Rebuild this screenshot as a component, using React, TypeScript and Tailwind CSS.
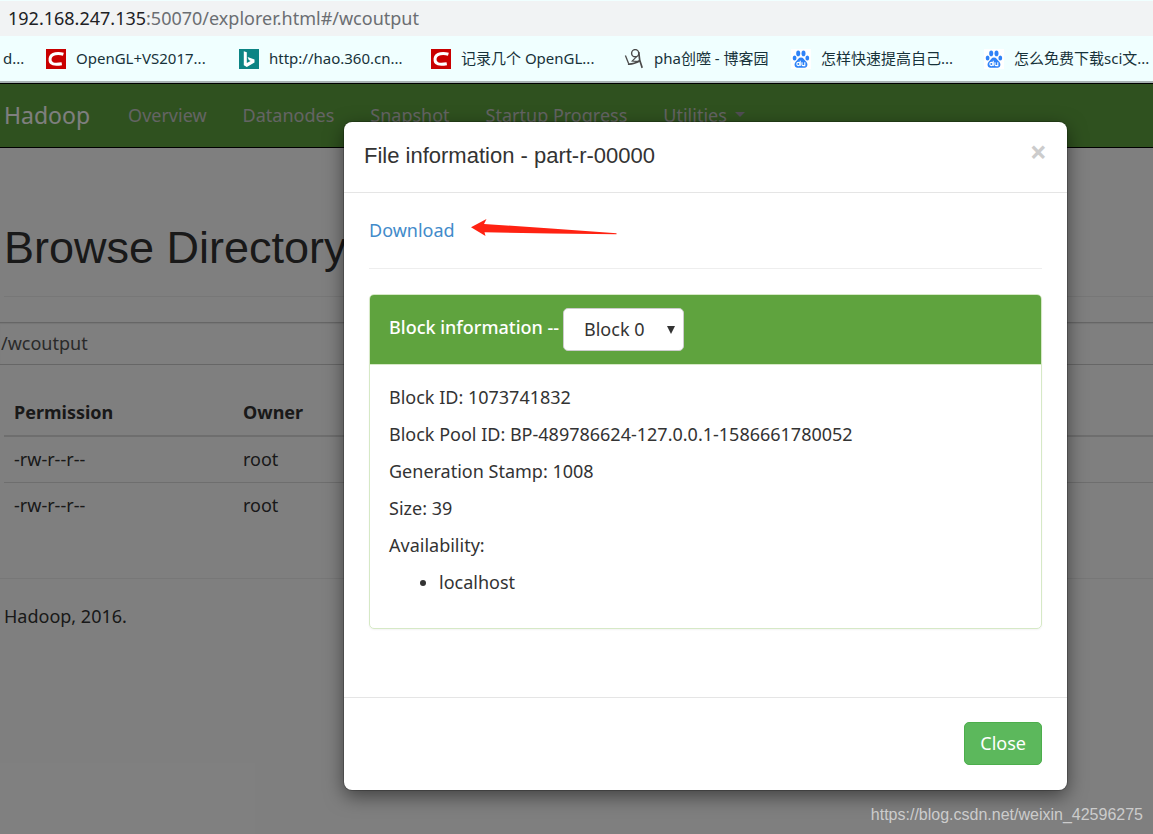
import React, { useState } from 'react';

interface Bookmark {
  label: string;
  icon: 'csdn' | 'bing' | 'cnblogs' | 'baidu';
  className: string;
}

const bookmarks: Bookmark[] = [
  { label: 'OpenGL+VS2017...', icon: 'csdn', className: 'w-[193px]' },
  { label: 'http://hao.360.cn...', icon: 'bing', className: 'w-[192px]' },
  { label: '记录几个 OpenGL...', icon: 'csdn', className: 'w-[193px]' },
  { label: 'pha创噬 - 博客园', icon: 'cnblogs', className: 'w-[167px]' },
  { label: '怎样快速提高自己...', icon: 'baidu', className: 'w-[193px]' },
  { label: '怎么免费下载sci文...', icon: 'baidu', className: 'w-[193px]' },
];

const navLinks = ['Overview', 'Datanodes', 'Snapshot', 'Startup Progress'];

const files = [
  { id: 1, permission: '-rw-r--r--', owner: 'root' },
  { id: 2, permission: '-rw-r--r--', owner: 'root' },
];

const blockInfo = [
  'Block ID: 1073741832',
  'Block Pool ID: BP-489786624-127.0.0.1-1586661780052',
  'Generation Stamp: 1008',
  'Size: 39',
  'Availability:',
];

const BookmarkIcon: React.FC<{ icon: Bookmark['icon'] }> = ({ icon }) => {
  if (icon === 'csdn') {
    return (
      <svg className="size-5 shrink-0" viewBox="0 0 20 20" aria-hidden="true">
        <rect width="20" height="20" fill="#c90000" />
        <path
          d="M17.4 5.3C13 4 5 3.8 4.1 9.6C3.4 15.6 9 15.8 15.8 14.7"
          fill="none"
          stroke="#fff"
          strokeWidth="3"
        />
      </svg>
    );
  }
  if (icon === 'bing') {
    return (
      <svg className="size-5 shrink-0" viewBox="0 0 20 20" aria-hidden="true">
        <rect width="20" height="20" fill="#0c8484" />
        <path d="M4.8 2.2L7.8 3.3V14L11.6 11.9L9.8 11L8.6 8L15.5 10.4V13.5L7.8 18L4.8 16.2Z" fill="#fff" />
      </svg>
    );
  }
  if (icon === 'cnblogs') {
    return (
      <svg className="size-5 shrink-0" viewBox="0 0 20 20" fill="none" stroke="#4a4a4a" aria-hidden="true">
        <circle cx="11.2" cy="4.2" r="3.6" strokeWidth="1.4" />
        <path d="M1.4 6.5L4.6 14.6" strokeWidth="1.3" />
        <path d="M4 15C8 15.6 12 13.8 16 11.4" strokeWidth="1.8" />
        <path d="M14.7 3C14.9 9 16 13.6 18.2 18.8" strokeWidth="1.7" />
        <path d="M12.6 7.6L8.2 12L15.4 12.6" strokeWidth="1.1" />
      </svg>
    );
  }
  return (
    <svg className="size-5 shrink-0" viewBox="0 0 20 20" aria-hidden="true">
      <rect width="20" height="20" fill="#fff" />
      <g fill="#2f82f7">
        <ellipse cx="7.2" cy="4.4" rx="2" ry="2.8" />
        <ellipse cx="12.5" cy="4.4" rx="2" ry="2.8" />
        <ellipse cx="3.6" cy="9" rx="1.9" ry="2.6" />
        <ellipse cx="16.3" cy="9" rx="1.9" ry="2.6" />
        <path d="M10 8.4C12.4 8.4 13 10.6 14.8 12.2C17.4 14.6 16.8 18.6 13.6 18.8H6.4C3.2 18.6 2.6 14.6 5.2 12.2C7 10.6 7.6 8.4 10 8.4Z" />
      </g>
      <g fill="none" stroke="#fff" strokeWidth="1.1">
        <circle cx="7.4" cy="15" r="1.6" />
        <path d="M9.2 11.8V17M11 13.2V15.8Q11.2 16.6 12.2 16.6H13.8V13.2" />
      </g>
    </svg>
  );
};

const BrowserBar: React.FC = () => (
  <header className="border-b-2 border-[#a8b3b3] bg-[#f0ffff] pt-px">
    <div className="flex h-[35px] items-center bg-[#f1f3f4] px-2 pb-[2px] text-lg text-[#202124]">
      <span>192.168.247.135</span>
      <span className="text-[#6b6e72]">:50070/explorer.html#/wcoutput</span>
    </div>
    <nav className="flex h-[45px] items-center overflow-hidden text-[15px] whitespace-nowrap text-[#17323a]">
      <a href="#" className="w-[46px] shrink-0 pl-[3px]">d...</a>
      {bookmarks.map((b) => (
        <a key={b.label} href="#" className={`flex shrink-0 items-center gap-[10px] ${b.className}`}>
          <BookmarkIcon icon={b.icon} />
          <span>{b.label}</span>
        </a>
      ))}
    </nav>
  </header>
);

const Navbar: React.FC = () => (
  <nav className="flex h-[65px] items-center gap-9 border-y border-black bg-[#5fa33e] pb-[2px] pl-1 text-lg text-[#c8c8c8]">
    <a href="#" className="mr-0.5 pt-[2px] text-[23px] text-white">Hadoop</a>
    {navLinks.map((link) => (
      <a key={link} href="#">{link}</a>
    ))}
    <a href="#" className="flex items-center gap-2">
      Utilities
      <svg className="h-[5px] w-[10px]" viewBox="0 0 10 5" fill="#a09ca8" aria-hidden="true">
        <path d="M0 0H10L5 5Z" />
      </svg>
    </a>
  </nav>
);

const Explorer: React.FC = () => {
  const [directory, setDirectory] = useState('/wcoutput');

  return (
    <div className="text-lg text-[#333]">
      <h1 className="ml-1 border-b border-[#eee] pt-[75px] pb-[23px] font-['Liberation_Sans',Arial,sans-serif] text-[45px] leading-[50px]">
        Browse Directory
      </h1>
      <input
        type="text"
        aria-label="Directory"
        value={directory}
        onChange={(e) => setDirectory(e.target.value)}
        className="mt-[25px] block h-[43px] w-full border-y border-[#ccc] bg-white pb-[2px] pl-px text-[#555] shadow-[inset_0_1px_1px_rgba(0,0,0,0.08)]"
      />
      <table className="mt-6 ml-1 w-full text-left leading-[26px]">
        <thead>
          <tr className="border-b-2 border-[#ddd]">
            <th className="w-[229px] px-[10px] py-[10px] font-bold">Permission</th>
            <th className="px-[10px] py-[10px] font-bold">Owner</th>
          </tr>
        </thead>
        <tbody>
          {files.map((f) => (
            <tr key={f.id} className="border-b border-[#ddd] last:border-0">
              <td className="px-[10px] pt-[9px] pb-[10px]">{f.permission}</td>
              <td className="px-[10px] pt-[9px] pb-[10px]">{f.owner}</td>
            </tr>
          ))}
        </tbody>
      </table>
      <footer className="mt-[50px] border-t border-[#eee] pt-6 pl-1 leading-[26px]">
        <p>Hadoop, 2016.</p>
      </footer>
    </div>
  );
};

const FileDialog: React.FC = () => {
  const [block, setBlock] = useState('0');

  return (
    <div
      role="dialog"
      aria-labelledby="dialog-title"
      className="rounded-lg bg-white text-lg text-[#333] shadow-[0_6px_19px_rgba(0,0,0,0.5)] ring-1 ring-black/20"
    >
      <div className="flex h-[71px] items-start justify-between border-b border-[#e5e5e5] px-5 pt-[19px]">
        <h4 id="dialog-title" className="font-['Liberation_Sans',Arial,sans-serif] text-[22px] leading-[30px]">
          File information - part-r-00000
        </h4>
        <button type="button" aria-label="Dismiss" className="text-[30px] leading-[22px] font-bold text-[#ccc]">
          ×
        </button>
      </div>

      <div className="px-[25px] pt-[25px] pb-[68px]">
        <div className="flex h-[51px] items-start gap-4 border-b border-[#eee] leading-[25px]">
          <a href="#" className="text-[#428bca]">Download</a>
          <svg className="mt-px h-[18px] w-[146px]" viewBox="0 0 146 18" fill="#ff2212" aria-hidden="true">
            <path d="M0 8.2L15.5 0L13 5L80 9.5L145.5 14.2V15.3L80 14.6L13.5 13.2L14.5 17Z" />
          </svg>
        </div>

        <section className="mt-[25px] rounded-[5px] border border-[#d6e9c6] shadow-xs">
          <div className="flex h-[70px] items-center gap-1 rounded-t-[4px] border-b border-[#d6e9c6] bg-[#5fa33e] px-[19px] font-medium text-white">
            <label htmlFor="block" className="pb-[6px]">Block information --</label>
            <div className="relative">
              <select
                id="block"
                value={block}
                onChange={(e) => setBlock(e.target.value)}
                className="h-[43px] w-[121px] appearance-none rounded-[5px] border border-[#ccc] bg-white pb-[2px] pl-5 font-normal text-[#333]"
              >
                <option value="0">Block 0</option>
              </select>
              <svg className="pointer-events-none absolute top-[18px] right-[9px] h-2 w-2" viewBox="0 0 8 8" fill="#333" aria-hidden="true">
                <path d="M0 0H8L4 8Z" />
              </svg>
            </div>
          </div>
          <div className="px-[19px] pt-5 pb-[33px] leading-[25px]">
            {blockInfo.map((line) => (
              <p key={line} className="mb-3">{line}</p>
            ))}
            <ul className="list-disc pl-[50px]">
              <li>localhost</li>
            </ul>
          </div>
        </section>
      </div>

      <div className="flex justify-end border-t border-[#e5e5e5] px-[25px] pt-6 pb-[25px]">
        <button type="button" className="h-[43px] rounded-[5px] border border-[#4cae4c] bg-[#5cb85c] px-[15px] pb-[2px] text-white">
          Close
        </button>
      </div>
    </div>
  );
};

const App: React.FC = () => (
  <div className="flex min-h-screen flex-col bg-white font-['Noto_Sans','Noto_Sans_CJK_SC',sans-serif]">
    <BrowserBar />
    <main className="relative flex-1 overflow-hidden">
      <Navbar />
      <Explorer />
      <div className="absolute inset-0 bg-black/50 pt-[39px] pr-[86px] pl-[344px]">
        <FileDialog />
      </div>
      <p className="absolute right-[10px] bottom-[7px] font-['Liberation_Sans',Arial,sans-serif] text-base text-[#ccc]">
        https://blog.csdn.net/weixin_42596275
      </p>
    </main>
  </div>
);

export default App;
